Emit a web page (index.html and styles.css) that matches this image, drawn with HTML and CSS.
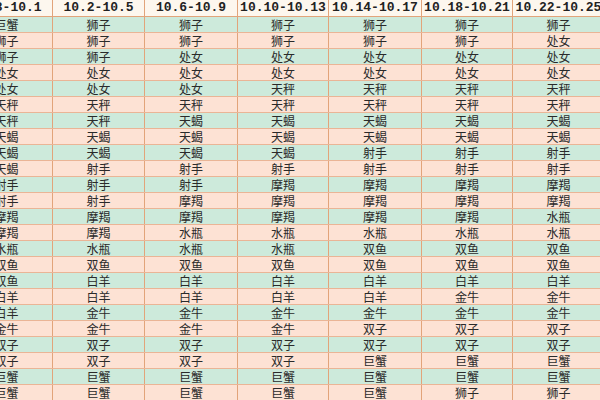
FILE: index.html
```html
<!DOCTYPE html>
<html lang="zh">
<head>
<meta charset="utf-8">
<link rel="stylesheet" href="styles.css">
</head>
<body>
<div class="sheet">
  <div class="row head"><div class="c">9.28-10.1</div><div class="c">10.2-10.5</div><div class="c">10.6-10.9</div><div class="c">10.10-10.13</div><div class="c">10.14-10.17</div><div class="c">10.18-10.21</div><div class="c">10.22-10.25</div></div>
  <div class="row g"><div class="c">巨蟹</div><div class="c">狮子</div><div class="c">狮子</div><div class="c">狮子</div><div class="c">狮子</div><div class="c">狮子</div><div class="c">狮子</div></div>
  <div class="row p"><div class="c">狮子</div><div class="c">狮子</div><div class="c">狮子</div><div class="c">狮子</div><div class="c">狮子</div><div class="c">狮子</div><div class="c">处女</div></div>
  <div class="row g"><div class="c">狮子</div><div class="c">狮子</div><div class="c">处女</div><div class="c">处女</div><div class="c">处女</div><div class="c">处女</div><div class="c">处女</div></div>
  <div class="row p"><div class="c">处女</div><div class="c">处女</div><div class="c">处女</div><div class="c">处女</div><div class="c">处女</div><div class="c">处女</div><div class="c">处女</div></div>
  <div class="row g"><div class="c">处女</div><div class="c">处女</div><div class="c">处女</div><div class="c">天秤</div><div class="c">天秤</div><div class="c">天秤</div><div class="c">天秤</div></div>
  <div class="row p"><div class="c">天秤</div><div class="c">天秤</div><div class="c">天秤</div><div class="c">天秤</div><div class="c">天秤</div><div class="c">天秤</div><div class="c">天秤</div></div>
  <div class="row g"><div class="c">天秤</div><div class="c">天秤</div><div class="c">天蝎</div><div class="c">天蝎</div><div class="c">天蝎</div><div class="c">天蝎</div><div class="c">天蝎</div></div>
  <div class="row p"><div class="c">天蝎</div><div class="c">天蝎</div><div class="c">天蝎</div><div class="c">天蝎</div><div class="c">天蝎</div><div class="c">天蝎</div><div class="c">天蝎</div></div>
  <div class="row g"><div class="c">天蝎</div><div class="c">天蝎</div><div class="c">天蝎</div><div class="c">天蝎</div><div class="c">射手</div><div class="c">射手</div><div class="c">射手</div></div>
  <div class="row p"><div class="c">天蝎</div><div class="c">射手</div><div class="c">射手</div><div class="c">射手</div><div class="c">射手</div><div class="c">射手</div><div class="c">射手</div></div>
  <div class="row g"><div class="c">射手</div><div class="c">射手</div><div class="c">射手</div><div class="c">摩羯</div><div class="c">摩羯</div><div class="c">摩羯</div><div class="c">摩羯</div></div>
  <div class="row p"><div class="c">射手</div><div class="c">射手</div><div class="c">摩羯</div><div class="c">摩羯</div><div class="c">摩羯</div><div class="c">摩羯</div><div class="c">摩羯</div></div>
  <div class="row g"><div class="c">摩羯</div><div class="c">摩羯</div><div class="c">摩羯</div><div class="c">摩羯</div><div class="c">摩羯</div><div class="c">摩羯</div><div class="c">水瓶</div></div>
  <div class="row p"><div class="c">摩羯</div><div class="c">摩羯</div><div class="c">水瓶</div><div class="c">水瓶</div><div class="c">水瓶</div><div class="c">水瓶</div><div class="c">水瓶</div></div>
  <div class="row g"><div class="c">水瓶</div><div class="c">水瓶</div><div class="c">水瓶</div><div class="c">水瓶</div><div class="c">双鱼</div><div class="c">双鱼</div><div class="c">双鱼</div></div>
  <div class="row p"><div class="c">双鱼</div><div class="c">双鱼</div><div class="c">双鱼</div><div class="c">双鱼</div><div class="c">双鱼</div><div class="c">双鱼</div><div class="c">双鱼</div></div>
  <div class="row g"><div class="c">双鱼</div><div class="c">白羊</div><div class="c">白羊</div><div class="c">白羊</div><div class="c">白羊</div><div class="c">白羊</div><div class="c">白羊</div></div>
  <div class="row p"><div class="c">白羊</div><div class="c">白羊</div><div class="c">白羊</div><div class="c">白羊</div><div class="c">白羊</div><div class="c">金牛</div><div class="c">金牛</div></div>
  <div class="row g"><div class="c">白羊</div><div class="c">金牛</div><div class="c">金牛</div><div class="c">金牛</div><div class="c">金牛</div><div class="c">金牛</div><div class="c">金牛</div></div>
  <div class="row p"><div class="c">金牛</div><div class="c">金牛</div><div class="c">金牛</div><div class="c">金牛</div><div class="c">双子</div><div class="c">双子</div><div class="c">双子</div></div>
  <div class="row g"><div class="c">双子</div><div class="c">双子</div><div class="c">双子</div><div class="c">双子</div><div class="c">双子</div><div class="c">双子</div><div class="c">双子</div></div>
  <div class="row p"><div class="c">双子</div><div class="c">双子</div><div class="c">双子</div><div class="c">双子</div><div class="c">巨蟹</div><div class="c">巨蟹</div><div class="c">巨蟹</div></div>
  <div class="row g"><div class="c">巨蟹</div><div class="c">巨蟹</div><div class="c">巨蟹</div><div class="c">巨蟹</div><div class="c">巨蟹</div><div class="c">巨蟹</div><div class="c">巨蟹</div></div>
  <div class="row p"><div class="c">巨蟹</div><div class="c">巨蟹</div><div class="c">巨蟹</div><div class="c">巨蟹</div><div class="c">巨蟹</div><div class="c">狮子</div><div class="c">狮子</div></div>
</div>
</body>
</html>
```

FILE: styles.css
```css
html, body {
  margin: 0;
  padding: 0;
  width: 600px;
  height: 400px;
  overflow: hidden;
  background: #ffffff;
}
.sheet {
  margin-left: -39px;
  width: 660px;
  display: flex;
  flex-direction: column;
}
.row {
  display: grid;
  grid-template-columns: 92px 92px 93px 91px 93px 91px 92px;
  height: 16px;
  border-bottom: 1px solid #eab596;
  box-sizing: border-box;
}
.row.head {
  height: 17px;
  background: #fdf7ee;
  border-bottom: 1px solid #e2a47a;
}
.row.g { background: #cdeadb; }
.row.p { background: #fde2d4; }
.c {
  border-right: 1px solid #e2a47a;
  text-align: center;
  font-family: "Noto Sans CJK SC", "Noto Sans", sans-serif;
  font-size: 12px;
  line-height: 15px;
  height: 15px;
  color: #2a2a2a;
  white-space: nowrap;
}
.head .c {
  font-family: "Liberation Mono", "DejaVu Sans Mono", monospace;
  font-weight: bold;
  font-size: 13px;
  line-height: 16px;
  height: 16px;
  color: #222;
}
```
